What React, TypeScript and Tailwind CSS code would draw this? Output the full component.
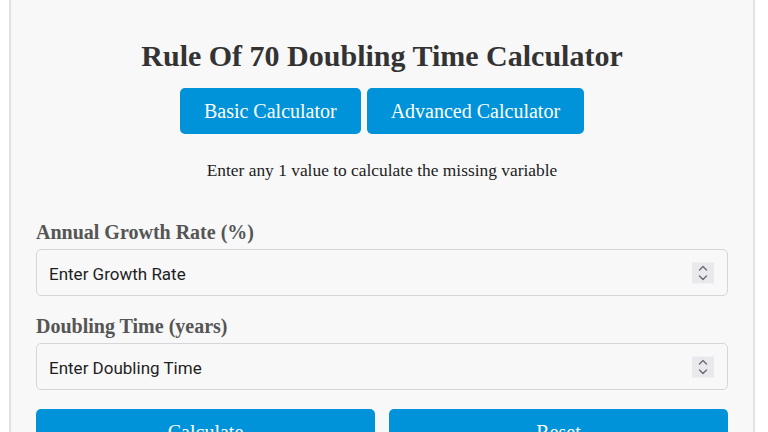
import React from "react";

function Spinner() {
  return (
    <div className="pointer-events-none absolute right-[14px] top-1/2 flex h-[21px] w-[22px] -translate-y-1/2 items-center justify-center bg-[#e9e9ed]">
      <svg width="12" height="19" viewBox="0 0 12 19" fill="none" stroke="#6b6b70" strokeWidth="1.4" strokeLinecap="round" strokeLinejoin="round">
        <path d="M2.5 6.5 L6 3 L9.5 6.5" />
        <path d="M2.5 12.5 L6 16 L9.5 12.5" />
      </svg>
    </div>
  );
}

function Field({ label, placeholder }: { label: string; placeholder: string }) {
  return (
    <div>
      <label className="mb-[5px] block text-[20px] font-bold leading-[23px] text-[#555]">
        {label}
      </label>
      <div className="relative">
        <input
          type="text"
          placeholder={placeholder}
          className="block h-[47px] w-full rounded-[5px] border border-[#d6d6d6] bg-[#f8f8f8] px-[12px] pt-[2px] font-['Roboto','Liberation_Sans',Arial,sans-serif] text-[17px] text-[#222] outline-none placeholder:text-[#1e1e1e]"
        />
        <Spinner />
      </div>
    </div>
  );
}

export default function App() {
  return (
    <div className="min-h-[432px] w-full overflow-hidden bg-white font-['Liberation_Serif','Times_New_Roman',serif]">
      <div className="ml-[9px] w-[746px] border-x-2 border-b-2 border-[#e2e2e2] bg-[#f8f8f8] px-[25px] pb-10 pt-[38px]">
        <h1 className="text-center text-[30px] font-bold leading-[35px] text-[#333]">
          Rule Of 70 Doubling Time Calculator
        </h1>
        <div className="mt-[15px] flex justify-center gap-[6px]">
          <button className="rounded-[5px] bg-[#0093d9] px-6 py-3 text-[20px] leading-[22px] text-white">
            Basic Calculator
          </button>
          <button className="rounded-[5px] bg-[#0093d9] px-6 py-3 text-[20px] leading-[22px] text-white">
            Advanced Calculator
          </button>
        </div>
        <p className="mt-[26px] text-center text-[17.4px] leading-[20px] text-[#222]">
          Enter any 1 value to calculate the missing variable
        </p>
        <div className="mt-[41px] flex flex-col gap-[19px]">
          <Field label="Annual Growth Rate (%)" placeholder="Enter Growth Rate" />
          <Field label="Doubling Time (years)" placeholder="Enter Doubling Time" />
        </div>
        <div className="mt-[19px] flex gap-[14px]">
          <button className="flex-1 rounded-[5px] bg-[#0093d9] py-3 text-[20px] leading-[22px] text-white">
            Calculate
          </button>
          <button className="flex-1 rounded-[5px] bg-[#0093d9] py-3 text-[20px] leading-[22px] text-white">
            Reset
          </button>
        </div>
      </div>
    </div>
  );
}
